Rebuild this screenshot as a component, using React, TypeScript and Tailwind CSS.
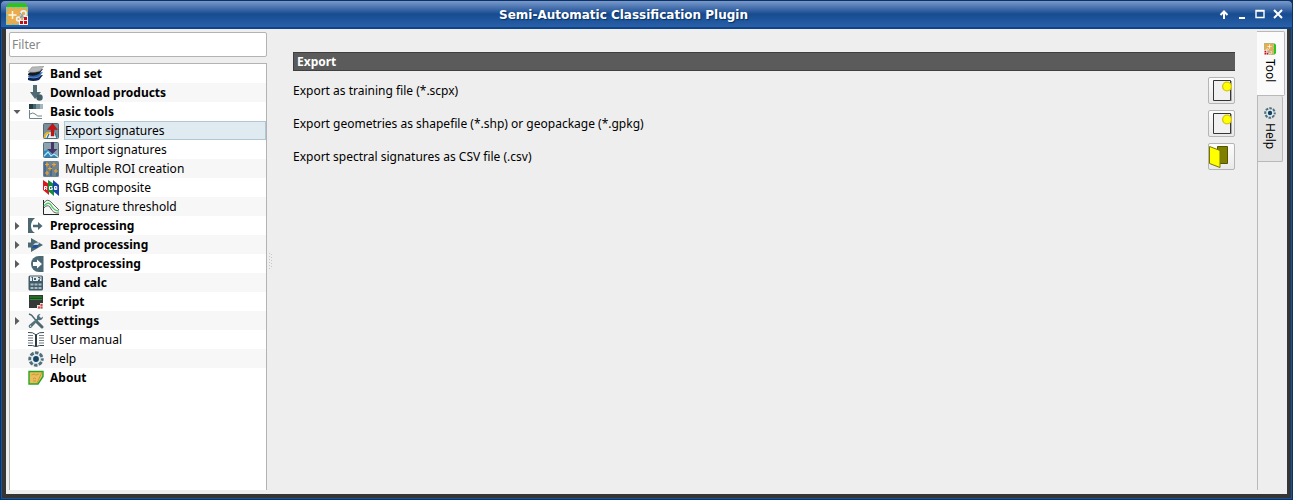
import React, { useState } from "react";

type IconProps = { className?: string };

const svgProps = (className = "h-4 w-4 shrink-0") => ({
  className,
  viewBox: "0 0 16 16",
  "aria-hidden": true,
});

function PluginIcon({ className }: IconProps) {
  return (
    <svg className={className} viewBox="0 0 22 22" aria-hidden="true">
      <path d="M0 4 3 0h16l3 4z" fill="#2fc41c" />
      <rect y="4" width="22" height="18" fill="#e9ab4b" />
      <rect x="0.7" y="4.7" width="20.6" height="16.6" fill="none" stroke="#62d0c4" strokeWidth="1.3" strokeDasharray="3 2" />
      <path d="M6.500 8v8M2.500 12h8" stroke="#fff6e6" strokeWidth="1.500" />
      <path d="M17 13h5v9h-9v-5h4z" fill="#f9efed" />
      <circle cx="17.500" cy="10.500" r="2.600" fill="none" stroke="#e8f1f8" strokeWidth="1.600" />
      <circle cx="12.500" cy="16" r="1.900" fill="none" stroke="#e8f1f8" strokeWidth="1.600" />
      <path d="m14 15 3-3M14 10l4 5" stroke="#7d9fbd" strokeWidth="1.200" />
      <path d="M18 14h3v3h-3zM14 18h3v3h-3zM18 18h3v3h-3z" fill="#c40d16" />
    </svg>
  );
}

function BandSetIcon() {
  return (
    <svg {...svgProps()}>
      <path d="m0 12 4-2 11-1-4 5q-6 2-11 0z" fill="#0b2458" />
      <path d="m0 10 4-3 11-1-4 5q-5 2-11 0z" fill="#2662b2" stroke="#c3d9ee" strokeWidth=".4" />
      <path d="m0 8 4-4 11-1-4 5q-5 3-11 1z" fill="#151a20" />
      <path d="m0 6 4-5q6 0 12-1l-4 5q-5 2-12 1z" fill="#b7b9bb" stroke="#8d8d8d" strokeWidth=".6" />
    </svg>
  );
}

function DownloadIcon() {
  return (
    <svg {...svgProps()}>
      <path d="M5 0h4v7h4l-6 7-5-7h3z" fill="#4f6c75" />
      <circle cx="11.500" cy="12.500" r="3.200" fill="#435d67" />
    </svg>
  );
}

function BasicToolsIcon() {
  return (
    <svg {...svgProps()}>
      <path d="M1 0h4v5H1z" fill="#243c46" />
      <path d="M5 0h3v5H5z" fill="#456570" />
      <path d="M8 0h4v5H8z" fill="#78919a" />
      <path d="M12 0h3v5h-3z" fill="#a4b7bd" />
      <path d="M1.500 6v8.500H14M2 10q3-2 5 0 2 3 7 2" fill="none" stroke="#6c858e" />
    </svg>
  );
}

function ExportIcon() {
  return (
    <svg {...svgProps()}>
      <rect x=".5" y=".5" width="15" height="15" rx="1" fill="#788e98" stroke="#526a75" />
      <path d="M1 15q0-5 4-6h6l4 6z" fill="#eef1f2" />
      <path d="M1.500 15q1-6 5-5" fill="none" stroke="#e4b521" strokeWidth="2" />
      <path d="m4 15 2-4M12 10l2 5" stroke="#25789b" strokeWidth="1.300" />
      <path d="m9.500 .5 5 6H11V13H8V6.500H4.500z" fill="#c71515" stroke="#871111" strokeWidth=".4" />
    </svg>
  );
}

function ImportIcon() {
  return (
    <svg {...svgProps()}>
      <rect x=".5" y=".5" width="15" height="15" rx="1" fill="#8ba4af" stroke="#566f7b" />
      <path d="M1 15V9l4-1 3 4 4-1 3 4z" fill="#2587c5" />
      <path d="m1 14 4-4 3 4 3-2 4 3" fill="none" stroke="#b8e7f2" strokeWidth="1.200" />
      <path d="M8 0h3v7h3.500l-5 5L4 7h4z" fill="#463567" />
    </svg>
  );
}

function RoiIcon() {
  return (
    <svg {...svgProps()}>
      <rect width="16" height="16" rx="1.500" fill="#6d8390" />
      <path d="M2 1v14M8 5v10M14 8v7" stroke="#486c91" strokeWidth="2" />
      <path d="M4 1.500v4M2 3.500h4M11 1.500v4M9 3.500h4M7 5.500v4M5 7.500h4M4 10v4M2 12h4M13 8v4M11 10h4" stroke="#f0a32b" strokeWidth="1.200" />
    </svg>
  );
}

function RgbIcon() {
  return (
    <svg {...svgProps()}>
      <path d="m0 0 6 4v11L0 10z" fill="#d71920" />
      <path d="m5 0 6 4v12L5 11z" fill="#168c38" />
      <path d="m10 0 6 5v11l-6-5z" fill="#1844ad" />
      <path d="M1.500 10V6.500h2.200v1.800H1.500m1.200 0 1.300 1.700M9.200 6.500H6.500V9.500h2.700V8H8M11.500 6.500v3h2.300V8.200h-2m2 0V6.500h-2.300" fill="none" stroke="#fff" strokeWidth="1" />
    </svg>
  );
}

function ThresholdIcon() {
  return (
    <svg {...svgProps()}>
      <path d="M.5 1v14.500H16" fill="none" stroke="#202820" />
      <path d="M1 4q3-5 7-1l8 8M1 9q3-4 6-1 3 7 9 6" fill="none" stroke="#39443a" strokeWidth=".8" />
      <path d="M1 7q4-5 7-1 3 6 8 6" fill="none" stroke="#54c968" strokeWidth="1.400" />
    </svg>
  );
}

function PreprocessingIcon() {
  return (
    <svg {...svgProps()}>
      <path d="M0 0h7Q3 3 3 8t4 7H0z" fill="#4c6973" />
      <path d="M5 6.800h5V4l4.500 4-4.500 4V9.200H5z" fill="#4c6973" />
    </svg>
  );
}

function BandProcessingIcon() {
  return (
    <svg {...svgProps()}>
      <path d="M0 5.500h3V1l12 7-12 7v-4.500H0z" fill="#4c6973" />
      <path d="m4 11 2-3 5-1-2 4z" fill="#1e4fa0" />
      <path d="m5 8 2-2 5-1-2 3z" fill="#c6d2d8" />
    </svg>
  );
}

function PostprocessingIcon() {
  return (
    <svg {...svgProps()}>
      <path d="M15.500 0v16H11a8 8 0 0 1 0-16z" fill="#4c6973" />
      <path d="M5 6h4V3.500L14 8l-5 4.500V10H5z" fill="#fff" />
    </svg>
  );
}

function CalcIcon() {
  return (
    <svg {...svgProps()}>
      <rect x=".5" y=".5" width="14.500" height="15" rx="1.500" fill="#405c69" />
      <path d="M2 1.500h11.500v4.500H2z" fill="#e7ecef" />
      <path d="M3.500 3 4.500 2v4M6 3l2 2m0-2L6 5M10 2.500h2V4l-2 1.500h2" fill="none" stroke="#35505e" strokeWidth=".9" />
      <path d="M2.500 8.500h3v2h-3zM6.500 8.500h3v2h-3zM10.500 8.500h3v2h-3zM2.500 12h3v2h-3zM6.500 12h3v2h-3zM10.500 12h3v2h-3z" fill="#a9bcc6" />
    </svg>
  );
}

function ScriptIcon() {
  return (
    <svg {...svgProps()}>
      <path d="M1 1h14v13H1z" fill="#343937" />
      <path d="M2 3h12M2 5.500h12" stroke="#149b1a" strokeWidth="1.200" />
      <path d="M9 11h3V9h3v6H9z" fill="#e9dfdd" />
      <path d="M10 12.500h2v2h-2zM12.500 10h2v2h-2zM12.500 12.500h2v2h-2z" fill="#cf4a4a" />
    </svg>
  );
}

function SettingsIcon() {
  return (
    <svg {...svgProps()}>
      <path d="m1 1 2.500 1L8 7.500" fill="none" stroke="#4d6871" strokeWidth="1.500" />
      <path d="m9 9 5 5" stroke="#4d6871" strokeWidth="3" strokeLinecap="round" />
      <path d="M15 3.500a3.500 3.500 0 0 1-4.500 3.500l-7 7.500a1.700 1.700 0 0 1-2.400-2.400L9 5.500A3.500 3.500 0 0 1 12.500 1L11 3l2 2z" fill="#54717b" />
      <circle cx="2.600" cy="13.200" r=".6" fill="#fff" />
    </svg>
  );
}

function ManualIcon() {
  return (
    <svg {...svgProps()}>
      <path d="M0 .5q5-.5 7.500 2v12Q5 13 0 13.500M16 .5q-5-.5-7.500 2v12Q11 13 16 13.500" fill="#fff" stroke="#344e59" />
      <path d="M8 2v13" stroke="#263640" strokeWidth="1.400" />
      <path d="M0 3.500h5M0 6h5M0 8.500h5M0 11h5M11 3.500h5M11 6h5M11 8.500h5M11 11h5" stroke="#747d85" />
    </svg>
  );
}

function HelpIcon({ className }: IconProps) {
  return (
    <svg {...svgProps(className)}>
      <circle cx="8" cy="8" r="7.300" fill="#dbe5e8" />
      <circle cx="8" cy="8" r="6.200" fill="none" stroke="#526f79" strokeWidth="3" strokeDasharray="3.400 1.469" strokeDashoffset="1.700" />
      <circle cx="8" cy="8" r="4.600" fill="#e4edf0" />
      <circle cx="8" cy="8" r="2.900" fill="#164466" />
    </svg>
  );
}

function AboutIcon() {
  return (
    <svg {...svgProps()}>
      <path d="M1 1.500h14v5l-5 7.500H1z" fill="#e9bd59" stroke="#29a526" strokeWidth="1.400" />
      <path d="M3.500 5 6 4l2 1 3-1M5 9l1.500-1L8 9M5 11h3M14 2 9 13" fill="none" stroke="#c09136" strokeWidth=".8" />
    </svg>
  );
}

type TreeItem = {
  label: string;
  icon: React.ComponentType;
  bold?: boolean;
  child?: boolean;
  arrow?: "open" | "closed";
};

const items: TreeItem[] = [
  { label: "Band set", icon: BandSetIcon, bold: true },
  { label: "Download products", icon: DownloadIcon, bold: true },
  { label: "Basic tools", icon: BasicToolsIcon, bold: true, arrow: "open" },
  { label: "Export signatures", icon: ExportIcon, child: true },
  { label: "Import signatures", icon: ImportIcon, child: true },
  { label: "Multiple ROI creation", icon: RoiIcon, child: true },
  { label: "RGB composite", icon: RgbIcon, child: true },
  { label: "Signature threshold", icon: ThresholdIcon, child: true },
  { label: "Preprocessing", icon: PreprocessingIcon, bold: true, arrow: "closed" },
  { label: "Band processing", icon: BandProcessingIcon, bold: true, arrow: "closed" },
  { label: "Postprocessing", icon: PostprocessingIcon, bold: true, arrow: "closed" },
  { label: "Band calc", icon: CalcIcon, bold: true },
  { label: "Script", icon: ScriptIcon, bold: true },
  { label: "Settings", icon: SettingsIcon, bold: true, arrow: "closed" },
  { label: "User manual", icon: ManualIcon },
  { label: "Help", icon: HelpIcon },
  { label: "About", icon: AboutIcon, bold: true },
];

function Arrow({ state }: { state: "open" | "closed" }) {
  return (
    <svg className="h-2 w-2" viewBox="0 0 8 8" aria-hidden="true">
      <path d={state === "open" ? "M.5 2h7L4 6z" : "M2 0v8l4.500-4z"} fill="#5c5c5c" />
    </svg>
  );
}

function TreeRow({ item, selected, onSelect }: { item: TreeItem; selected: boolean; onSelect: () => void }) {
  const Icon = item.icon;
  return (
    <li className="flex h-[19px] even:bg-[#f7f7f7]">
      <button
        type="button"
        aria-expanded={item.arrow ? item.arrow === "open" : undefined}
        aria-current={selected ? "page" : undefined}
        onClick={onSelect}
        className={`flex w-full items-center text-left ${item.child ? "pl-[33px]" : ""}`}
      >
        {!item.child && (
          <span className="flex w-[18px] shrink-0 pl-[3px]">{item.arrow && <Arrow state={item.arrow} />}</span>
        )}
        <Icon />
        <span
          className={`ml-[5px] flex h-[19px] flex-1 items-center border ${item.bold ? "font-bold" : ""} ${
            selected ? "border-[#b0c8d3] bg-[#dfeaf1]" : "border-transparent"
          }`}
        >
          {item.label}
        </span>
      </button>
    </li>
  );
}

function NewFileIcon() {
  return (
    <svg className="h-[25px] w-[25px]" viewBox="0 0 25 25" aria-hidden="true">
      <path d="M4.500 2.500h17v20h-17z" fill="#f1f1f2" stroke="#353535" />
      <path d="M22.500 3v20" stroke="#aaa" />
      <circle cx="18" cy="8.500" r="4.400" fill="#ffff00" stroke="#d5c719" strokeWidth="1.400" />
    </svg>
  );
}

function FolderIcon() {
  return (
    <svg className="h-[25px] w-[25px]" viewBox="0 0 25 25" aria-hidden="true">
      <path d="M8.500 2.500h10v17h-10z" fill="#808000" stroke="#555500" />
      <path d="m.5 2.500 10.500 4v17l-10.500-4z" fill="#ffff00" stroke="#757500" />
    </svg>
  );
}

const exportsList = [
  { label: "Export as training file (*.scpx)", icon: NewFileIcon },
  { label: "Export geometries as shapefile (*.shp) or geopackage (*.gpkg)", icon: NewFileIcon },
  { label: "Export spectral signatures as CSV file (.csv)", icon: FolderIcon },
];

function TitleBar() {
  const controls = [
    { name: "Shade", path: "M5 10V2M1.500 6 5 2.500l3.500 3.500", stroke: 2 },
    { name: "Minimize", path: "M2 9h6", stroke: 2 },
    { name: "Maximize", path: "M1 1.500h8v7H1zM1 2h8", stroke: 1.4 },
    { name: "Close", path: "m1 1 8 8M9 1 1 9", stroke: 2 },
  ];
  return (
    <header className="flex h-[29px] shrink-0 items-center rounded-t-[5px] border border-b-2 border-[#0c3262] border-b-[#0f4389] bg-linear-to-b from-[#7899cc] via-[#174c91] via-50% to-[#285fa7] pr-[9px] pl-[5px] text-white">
      <PluginIcon className="h-[22px] w-[22px]" />
      <h1 className="flex-1 pt-0.5 text-center font-['DejaVu_Sans',sans-serif] text-[12px] leading-5 font-bold [text-shadow:1px_1px_1px_#0b2f61]">
        Semi-Automatic Classification Plugin
      </h1>
      <div className="flex gap-2">
        {controls.map((c) => (
          <button key={c.name} type="button" aria-label={c.name}>
            <svg className="h-[10px] w-[10px]" viewBox="0 0 10 10" aria-hidden="true">
              <path d={c.path} fill="none" stroke="#fff" strokeWidth={c.stroke} />
            </svg>
          </button>
        ))}
      </div>
    </header>
  );
}

export default function App() {
  const [selected, setSelected] = useState("Export signatures");
  const [filter, setFilter] = useState("");

  return (
    <div className="flex min-h-screen flex-col bg-[#0c3262] font-['Noto_Sans',sans-serif] text-[12px] leading-4 text-black">
      <TitleBar />
      <div className="flex flex-1 flex-col border border-t-0 border-[#0c3262]">
        <div className="flex flex-1 border border-t-0 border-[#17539d] bg-[#353535] px-1 pb-1">
          <div className="flex flex-1 bg-[#eeeeee] pt-[2px] pr-[3px] pb-1 pl-[3px]">
            <aside className="flex w-[258px] shrink-0 flex-col gap-[6px] pt-px">
              <input
                type="text"
                aria-label="Filter"
                placeholder="Filter"
                value={filter}
                onChange={(e) => setFilter(e.target.value)}
                className="h-[25px] w-full shrink-0 rounded-[2px] border border-[#b3b3b3] bg-white px-[2px] outline-none placeholder:text-[#868686]"
              />
              <nav aria-label="Tools" className="flex-1 border border-b-0 border-[#b3b3b3] bg-white">
                <ul>
                  {items.map((item) => (
                    <TreeRow
                      key={item.label}
                      item={item}
                      selected={item.label === selected}
                      onSelect={() => setSelected(item.label)}
                    />
                  ))}
                </ul>
              </nav>
            </aside>
            <div className="flex w-[7px] shrink-0 items-center justify-center">
              <svg className="h-4 w-[3px]" viewBox="0 0 3 16" aria-hidden="true">
                <path d="M.5 0v16M2.500 1v15" stroke="#c8c8c8" strokeDasharray="1 2" />
              </svg>
            </div>
            <main className="flex-1 pt-[21px] pr-[22px] pl-[19px]">
              <h2 className="mb-[6px] flex h-[19px] items-center border border-r-0 border-[#3f3f3f] bg-[#5b5b5b] px-[3px] font-bold text-white">
                Export
              </h2>
              <ul className="flex flex-col gap-[6px]">
                {exportsList.map(({ label, icon: Icon }) => (
                  <li key={label} className="flex h-[27px] items-center justify-between">
                    <span>{label}</span>
                    <button
                      type="button"
                      aria-label={label}
                      className="flex h-[27px] w-[27px] items-center justify-center rounded-[2px] border border-[#b5b5b5] bg-linear-to-b from-[#fdfdfd] to-[#e9e9e9]"
                    >
                      <Icon />
                    </button>
                  </li>
                ))}
              </ul>
            </main>
            <div role="tablist" aria-orientation="vertical" className="flex w-[27px] shrink-0 flex-col items-start border-l border-[#b9b9b9]">
              <button
                type="button"
                role="tab"
                aria-selected="true"
                className="-ml-px flex h-[65px] w-[28px] flex-col items-center gap-1 rounded-r-[2px] border border-l-0 border-[#b9b9b9] bg-[#fbfbfb] pt-[11px] pr-px"
              >
                <PluginIcon className="h-3 w-3 shrink-0 rotate-90" />
                <span className="[writing-mode:vertical-rl]">Tool</span>
              </button>
              <button
                type="button"
                role="tab"
                aria-selected="false"
                className="flex h-[66px] w-[25px] flex-col items-center gap-1 rounded-r-[2px] border border-t-0 border-l-0 border-[#b9b9b9] bg-[#e4e4e4] pt-[11px] pr-px"
              >
                <HelpIcon className="h-3 w-3 shrink-0" />
                <span className="[writing-mode:vertical-rl]">Help</span>
              </button>
            </div>
          </div>
        </div>
      </div>
    </div>
  );
}
